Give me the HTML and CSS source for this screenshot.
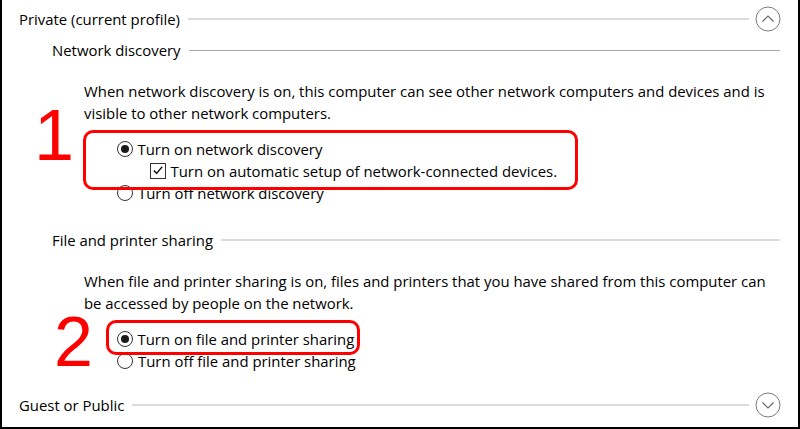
FILE: index.html
```html
<!DOCTYPE html>
<html>
<head>
<meta charset="utf-8">
<link rel="stylesheet" href="styles.css">
</head>
<body>
<div class="frame">
  <div class="profile-head">
    <span class="head-title">Private (current profile)</span>
    <span class="rule rule-light"></span>
    <svg class="chev" width="26" height="26" viewBox="0 0 26 26"><circle cx="13" cy="13" r="12" fill="none" stroke="#7a7a7a" stroke-width="1"/><path d="M7.5 15.5 L13 10 L18.5 15.5" fill="none" stroke="#6a6a6a" stroke-width="1.2"/></svg>
  </div>

  <div class="sub-head first">
    <span class="sub-title">Network discovery</span>
    <span class="rule rule-dark"></span>
  </div>
  <p class="desc">When network discovery is on, this computer can see other network computers and devices and is<br>visible to other network computers.</p>

  <div class="group">
    <span class="num num-1">1</span>
    <div class="mark mark-1">
      <div class="opt"><span class="radio on"></span><span>Turn on network discovery</span></div>
      <div class="opt sub"><span class="check"><svg width="15" height="15" viewBox="0 0 15 15"><path d="M3 7.5 L6 10.5 L12 3.5" fill="none" stroke="#000" stroke-width="1.3"/></svg></span><span>Turn on automatic setup of network-connected devices.</span></div>
    </div>
    <div class="opt after-1"><span class="radio"></span><span>Turn off network discovery</span></div>
  </div>

  <div class="sub-head second">
    <span class="sub-title">File and printer sharing</span>
    <span class="rule rule-light"></span>
  </div>
  <p class="desc">When file and printer sharing is on, files and printers that you have shared from this computer can<br>be accessed by people on the network.</p>

  <div class="group">
    <span class="num num-2">2</span>
    <div class="mark mark-2">
      <div class="opt"><span class="radio on"></span><span>Turn on file and printer sharing</span></div>
    </div>
    <div class="opt after-2"><span class="radio"></span><span>Turn off file and printer sharing</span></div>
  </div>

  <div class="profile-head guest">
    <span class="head-title">Guest or Public</span>
    <span class="rule rule-light"></span>
    <svg class="chev" width="26" height="26" viewBox="0 0 26 26"><circle cx="13" cy="13" r="12" fill="none" stroke="#7a7a7a" stroke-width="1"/><path d="M7.5 10.5 L13 16 L18.5 10.5" fill="none" stroke="#6a6a6a" stroke-width="1.2"/></svg>
  </div>
</div>
</body>
</html>
```

FILE: styles.css
```css
html, body {
  margin: 0;
  padding: 0;
  background: #fff;
}
.frame {
  width: 800px;
  height: 429px;
  box-sizing: border-box;
  border-left: 2px solid #000;
  border-right: 2px solid #000;
  border-bottom: 2px solid #000;
  background: #fff;
  font-family: "Open Sans", "Noto Sans", sans-serif;
  font-size: 14.9px;
  color: #000;
  overflow: hidden;
}
.profile-head {
  height: 38px;
  display: flex;
  align-items: center;
  padding-left: 17px;
  padding-right: 17px;
}
.profile-head.guest {
  margin-top: 14px;
}
.head-title {
  white-space: nowrap;
}
.rule {
  flex: 1;
  height: 0;
  margin-left: 8px;
}
.rule-light {
  border-top: 2px solid #dcdcdc;
}
.rule-dark {
  border-top: 1px solid #a8a8a8;
}
.profile-head .rule {
  margin-right: 6px;
}
.chev {
  display: block;
  flex: none;
}
.sub-head {
  height: 24px;
  display: flex;
  align-items: center;
  padding-left: 50px;
  padding-right: 18px;
}
.sub-head.second {
  margin-top: 24px;
}
.sub-title {
  white-space: nowrap;
}
.desc {
  margin: 18px 0 0 0;
  padding-left: 82px;
  line-height: 22px;
  white-space: nowrap;
}
.group {
  position: relative;
  margin-top: 6px;
  padding-left: 81px;
}
.mark {
  position: relative;
  z-index: 2;
  border: 3.5px solid #f00;
  border-radius: 10px;
  box-sizing: border-box;
}
.mark-1 {
  width: 495px;
  padding: 4.5px 0 5.5px 30.5px;
}
.mark-2 {
  width: 254px;
  margin-left: 23px;
  padding: 4.5px 0 2.5px 7.5px;
}
.opt {
  height: 22px;
  display: flex;
  align-items: center;
  white-space: nowrap;
}
.opt.sub {
  padding-left: 33px;
}
.after-1 {
  margin-top: -8px;
  padding-left: 34px;
}
.after-2 {
  margin-top: -5px;
  padding-left: 34px;
}
.radio {
  width: 16px;
  height: 16px;
  box-sizing: border-box;
  border: 1px solid #333;
  border-radius: 50%;
  margin-right: 5px;
  flex: none;
  display: flex;
  align-items: center;
  justify-content: center;
  background: #fff;
}
.radio.on::after {
  content: "";
  width: 8px;
  height: 8px;
  border-radius: 50%;
  background: #1a1a1a;
}
.check {
  width: 16px;
  height: 16px;
  box-sizing: border-box;
  border: 1px solid #333;
  margin-right: 5px;
  flex: none;
  display: flex;
  align-items: center;
  justify-content: center;
}
.check svg {
  display: block;
}
.num {
  position: absolute;
  font-family: "Liberation Sans", Arial, sans-serif;
  color: #f00;
  line-height: 1;
  z-index: 3;
}
.num-1 {
  font-size: 72px;
  left: 32px;
  top: -31px;
}
.num-2 {
  font-size: 70px;
  left: 52px;
  top: -13px;
}
```
